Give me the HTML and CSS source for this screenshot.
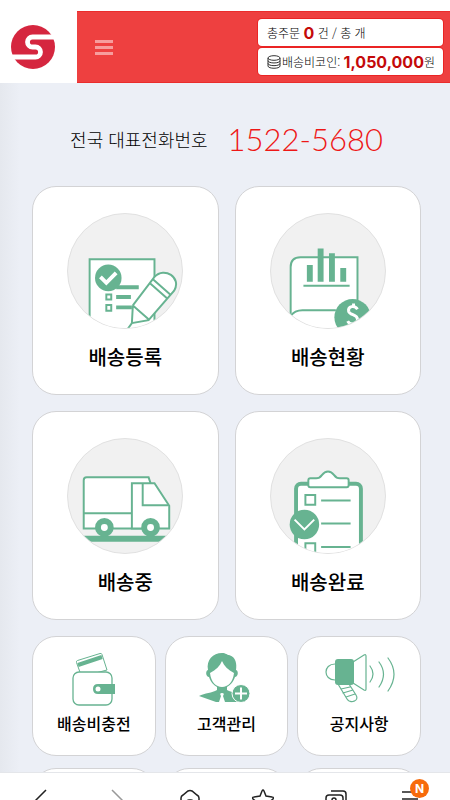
FILE: index.html
```html
<!DOCTYPE html>
<html lang="ko">
<head>
<meta charset="utf-8">
<meta name="viewport" content="width=device-width, initial-scale=1">
<title>배송 관리</title>
<link rel="stylesheet" href="styles.css">
</head>
<body>
<header class="header">
  <a class="logo" href="#" aria-label="홈">
    <svg width="44" height="44" viewBox="0 0 44 44">
      <circle cx="22" cy="22" r="22" fill="#d5263f"/>
      <path d="M44 12H21.500a5 5 0 0 0 0 10h3a5 5 0 0 1 0 10H0" fill="none" stroke="#fff" stroke-width="4.800"/>
    </svg>
  </a>
  <button class="menu-button" type="button" aria-label="메뉴"><span></span><span></span><span></span></button>
  <div class="status">
    <p class="status-row">총주문 <strong>0</strong> 건 / 총 개</p>
    <p class="status-row"><svg class="coins" width="14" height="14" viewBox="0 0 14 14" fill="none" stroke="#333" stroke-width="1">
        <ellipse cx="7" cy="3" rx="6" ry="2.300"/>
        <path d="M1 3v8c0 3 12 3 12 0V3M1 5.700c0 3 12 3 12 0M1 8.400c0 3 12 3 12 0"/>
      </svg>배송비코인: <strong>1,050,000</strong>원</p>
  </div>
</header>

<main class="content">
  <p class="contact">전국 대표전화번호 <a class="phone" href="tel:1522-5680">1522-5680</a></p>

  <nav class="main-grid" aria-label="배송">
    <a class="card" href="#">
      <span class="disc">
        <svg viewBox="0 0 116 116" fill="none" stroke="#67b391" stroke-width="2">
          <path d="M22 118V46h66v72z" fill="#fff"/>
          <path d="M49 74.500h23M49 84.500h15M49 95h16" stroke-width="4"/>
          <path d="M39 82h5v5h-5zM39 92.500h5v6h-5z"/>
          <circle cx="41" cy="65" r="13.500" fill="#67b391" stroke="none"/>
          <path d="M33 64l6 6 10-10" stroke="#fff" stroke-width="4"/>
          <path d="M66 93L88 64C98 53 116 65 108 78L82 108 65 111 60 118M66 93l-1 18M66 93l16 14M84 71l17 15M87 67l17 15" fill="#fff"/>
        </svg>
      </span>
      <span class="label">배송등록</span>
    </a>
    <a class="card" href="#">
      <span class="disc">
        <svg viewBox="0 0 116 116" fill="none" stroke="#67b391" stroke-width="2">
          <path d="M20 118V54q0-10 10-10h58v74z" fill="#fff"/>
          <path d="M20 104q4-6 12-6h34"/>
          <path d="M33 73h47"/>
          <path d="M39.500 52v17M50.500 35v34M62 40v29M73.500 55v14" stroke-width="6"/>
          <circle cx="83" cy="105" r="18.500" fill="#67b391" stroke="none"/>
          <path d="M88 97c-3-5-10-3-9 2 1 4 9 3 9 8 0 6-8 6-10 2M84 91v4M84 111v4" stroke="#fff" stroke-width="3"/>
        </svg>
      </span>
      <span class="label">배송현황</span>
    </a>
    <a class="card" href="#">
      <span class="disc">
        <svg viewBox="0 0 116 116" fill="none" stroke="#67b391" stroke-width="2">
          <path d="M0 101.500h116" stroke-width="6"/>
          <path d="M16 91V42q0-3 3-3h63l2 6v46z" fill="#fff"/>
          <path d="M16 75.500h49"/>
          <path d="M65 91V45h23l15 23v23z" fill="#fff"/>
          <path d="M76 45v22.500h26"/>
          <circle cx="37" cy="90" r="6.500" fill="#fff" stroke-width="6"/>
          <circle cx="84" cy="90" r="6.500" fill="#fff" stroke-width="6"/>
        </svg>
      </span>
      <span class="label">배송중</span>
    </a>
    <a class="card" href="#">
      <span class="disc">
        <svg viewBox="0 0 116 116" fill="none" stroke="#67b391" stroke-width="2">
          <rect x="25.500" y="45.500" width="66" height="90" rx="5" fill="#fff" stroke-width="4"/>
          <path d="M38 42q0-2 2-2h6c7 0 5-7 12-7s5 7 12 7h7q2 0 2 2v5q0 2-2 2H40q-2 0-2-2z" fill="#fff"/>
          <path d="M35 57h10v10H35zM35 106h10v14H35zM51 62.500h30M51 86h30M51 110h30"/>
          <circle cx="34" cy="87" r="15" fill="#67b391" stroke="none"/>
          <path d="M24 82l10 10 10-10" stroke="#fff"/>
        </svg>
      </span>
      <span class="label">배송완료</span>
    </a>
  </nav>

  <nav class="sub-grid" aria-label="관리">
    <a class="card card-small" href="#">
      <svg class="icon" width="72" height="56" viewBox="0 0 72 56" fill="none" stroke="#67b391">
        <path d="M18.500 12.500Q18 11 19.500 10.500L42 3.500q1.500-.5 2 1L49 20 30 25h-7z" fill="#fff"/>
        <path d="M20 15l24-8" stroke-width="4"/>
        <rect x="15" y="22" width="39" height="33" rx="6" fill="#fff" stroke-width="1.300"/>
        <path d="M57 34H40q-5 0-5 5t5 5h17z" fill="#67b391" stroke="none"/>
        <circle cx="40" cy="39" r="2.500" fill="#fff" stroke="none"/>
      </svg>
      <span class="label">배송비충전</span>
    </a>
    <a class="card card-small" href="#">
      <svg class="icon" width="72" height="56" viewBox="0 0 72 56" fill="#67b391">
        <path d="M18 20C16 10 23 3 32 3c4 0 5 2 7 2 7 2 8 9 7 15 3 1 2 7-1 7-2 6-5 8-8 10v3c5 3 14 2 18 7v5H26L9 46c6-3 13-3 18-6v-3c-3-2-6-4-8-10-3 0-4-6-1-7z"/>
        <path d="M20 23c6-3 10-7 12-12 2 5 6 9 12 12-1 9-6 14-12 14s-11-5-12-14z" fill="#fff"/>
        <path d="M29 52l2-6q-2-3 1-3t1 3l2 6z" fill="#fff"/>
        <circle cx="51" cy="43.500" r="9" stroke="#fff"/>
        <path d="M45 43.500h12M51 37.500v12" stroke="#fff" stroke-width="2"/>
      </svg>
      <span class="label">고객관리</span>
    </a>
    <a class="card card-small" href="#">
      <svg class="icon" width="72" height="56" viewBox="0 0 72 56" fill="none" stroke="#67b391" stroke-width="1.200" stroke-linecap="round">
        <path d="M12 14C0 14 0 30 12 30M30 12L41 5q2-1 2 1v33q0 2-2 1L30 33"/>
        <path d="M15 34l9 15c3 5 13 2 9-4l-7-11M18 39l9-2M20 43l10-3M23 47l9-3"/>
        <rect x="12" y="9" width="19" height="26" rx="3" fill="#67b391" stroke="none"/>
        <path d="M47 16q6 8 0 16M56 12q9 12 0 25M65 8q12 16 0 33"/>
      </svg>
      <span class="label">공지사항</span>
    </a>
    <a class="card card-small" href="#" aria-label="더보기 1"></a>
    <a class="card card-small" href="#" aria-label="더보기 2"></a>
    <a class="card card-small" href="#" aria-label="더보기 3"></a>
  </nav>
</main>

<footer class="toolbar">
  <button type="button" aria-label="뒤로"><svg width="24" height="24" viewBox="0 0 24 24"><path d="M18 2L8 12l10 10"/></svg></button>
  <button class="muted" type="button" aria-label="앞으로"><svg width="24" height="24" viewBox="0 0 24 24"><path d="M10 2l10 10-10 10"/></svg></button>
  <button type="button" aria-label="홈"><svg width="24" height="24" viewBox="0 0 24 24"><path d="M5 22V10q0-2 2-3l5-4q2-1 4 0l5 4q2 1 2 3v12zM11 21v-7q0-2 2-2h2q2 0 2 2v7"/></svg></button>
  <button type="button" aria-label="즐겨찾기"><svg width="24" height="24" viewBox="0 0 24 24"><path d="M12 3q1-2 2 0l2 5 6 1q2 0 1 2l-5 4 1 7-6-3-6 3 1-7-5-4q-1-2 1-2l6-1z"/></svg></button>
  <button type="button" aria-label="탭"><svg width="24" height="24" viewBox="0 0 24 24"><path d="M7 3h12q3 0 3 3v12M5 7h11q3 0 3 3v11H2V10q0-3 3-3zM8 15v-3q0-2 2-2t2 2v3z"/></svg></button>
  <button type="button" aria-label="새 알림 메뉴"><svg width="24" height="24" viewBox="0 0 24 24"><path d="M4 4h16M4 11h16M4 18h16"/></svg><span class="badge">N</span></button>
</footer>
</body>
</html>
```
FILE: styles.css
```css
* { box-sizing: border-box; }

body {
  margin: 0;
  height: 100vh;
  padding-top: 11px;
  display: flex;
  flex-direction: column;
  background: #fff;
  color: #000;
  font-family: "Noto Sans CJK KR", sans-serif;
}

p { margin: 0; }
a { color: inherit; text-decoration: none; }

button {
  border: 0;
  padding: 0;
  background: none;
}

.header {
  flex: none;
  display: flex;
  height: 72px;
  background: #ee4040;
  border-top: 1px solid #ea2c2c;
  border-bottom: 1px solid #ea2c2c;
}

.logo {
  width: 77px;
  margin: -1px 0;
  padding-left: 11px;
  display: flex;
  align-items: center;
  background: #fff;
}

.menu-button {
  align-self: center;
  margin-left: 18px;
  width: 18px;
  display: grid;
  gap: 3px;
}

.menu-button span {
  height: 3px;
  background: #f79d9d;
}

.status {
  margin: 7px 7px 0 auto;
  width: 185px;
  display: grid;
  grid-auto-rows: 27px;
  align-content: start;
  gap: 2px;
}

.status-row {
  display: flex;
  align-items: center;
  padding-left: 9px;
  background: #fff;
  border-radius: 4px;
  box-shadow: 0 0 0 1px #ea2424;
  font-size: 12px;
  font-weight: 300;
  line-height: 26px;
  white-space: pre;
}

.status strong {
  color: #c40a0a;
  font-family: Inter, sans-serif;
  font-size: 16px;
  font-weight: 700;
}

.coins { margin-right: 1px; }

.content {
  flex: 1;
  min-height: 0;
  overflow-y: auto;
  scrollbar-width: none;
  padding: 0 29px 0 32px;
  background: linear-gradient(90deg, #e5e8ee, #eceff6 20px);
}

.contact {
  display: flex;
  justify-content: center;
  align-items: center;
  gap: 20px;
  height: 103px;
  padding-top: 8px;
  font-size: 18px;
  font-weight: 300;
}

.phone {
  color: #ee1717;
  font-family: Lato, sans-serif;
  font-size: 31px;
  font-weight: 300;
}

.main-grid {
  display: grid;
  grid-template-columns: 1fr 1fr;
  gap: 16px;
}

.card {
  height: 209px;
  padding-top: 26px;
  display: flex;
  flex-direction: column;
  align-items: center;
  background: #fff;
  border: 1px solid #d3d3d5;
  border-radius: 24px;
  font-size: 20px;
  font-weight: 500;
}

.disc {
  width: 116px;
  height: 116px;
  overflow: hidden;
  background: #f1f1f1;
  border: 1px solid #e1e1e1;
  border-radius: 50%;
}

.disc svg { display: block; }

.disc + .label {
  margin-top: 12px;
  line-height: 32px;
}

.sub-grid {
  margin-top: 16px;
  padding-bottom: 24px;
  display: grid;
  grid-template-columns: repeat(3, 1fr);
  column-gap: 9px;
  row-gap: 12px;
}

.card-small {
  height: 120px;
  padding-top: 13px;
  font-size: 16px;
}

.card-small .label {
  margin-top: 5px;
  line-height: 24px;
}

.toolbar {
  flex: none;
  height: 28px;
  overflow: hidden;
  display: grid;
  grid-template-columns: repeat(6, 1fr);
  align-items: start;
  padding: 15px 3px 0;
  background: #fff;
  border-top: 1px solid #e4e6ea;
}

.toolbar button {
  position: relative;
  color: #222;
}

.toolbar .muted { color: #999; }

.toolbar svg {
  fill: none;
  stroke: currentColor;
  stroke-width: 1.5;
}

.badge {
  position: absolute;
  top: -9px;
  left: 50%;
  width: 19px;
  height: 19px;
  border-radius: 50%;
  background: #f76b0c;
  color: #fff;
  font: 700 12px/19px Inter, sans-serif;
}
```
